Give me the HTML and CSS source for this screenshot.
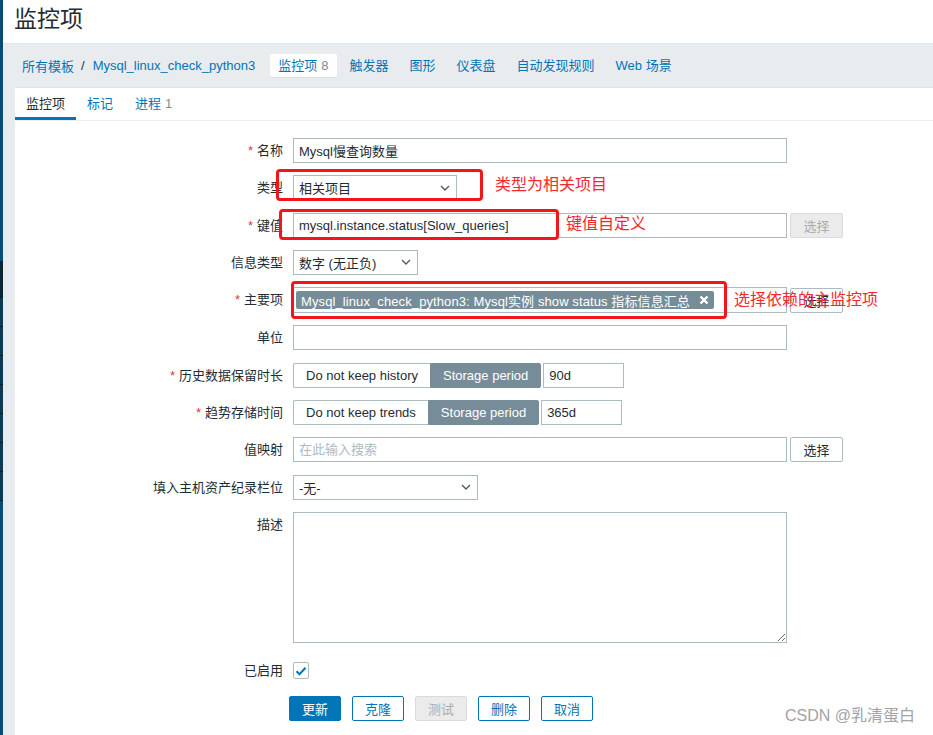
FILE: index.html
```html
<!DOCTYPE html>
<html lang="zh-CN">
<head>
  <meta charset="UTF-8">
  <title>监控项</title>
  <link rel="stylesheet" href="styles.css">
</head>
<body>
  <div class="page">
    <aside class="sidebar">
      <div class="sb-top"></div>
      <div class="sb-item sb-first"></div>
      <div class="sb-item"></div>
      <div class="sb-item"></div>
      <div class="sb-item"></div>
      <div class="sb-item"></div>
      <div class="sb-item"></div>
      <div class="sb-item"></div>
      <div class="sb-item"></div>
      <div class="sb-rest"></div>
    </aside>

    <div class="main">
      <header class="page-title">
        <h1>监控项</h1>
      </header>

      <div class="content">
        <nav class="header-nav">
          <ul class="breadcrumbs">
            <li><a href="#">所有模板</a></li>
            <li class="sep">/</li>
            <li><a href="#">Mysql_linux_check_python3</a></li>
          </ul>
          <ul class="host-nav">
            <li class="selected"><a href="#">监控项</a><span class="count">8</span></li>
            <li><a href="#">触发器</a></li>
            <li><a href="#">图形</a></li>
            <li><a href="#">仪表盘</a></li>
            <li><a href="#">自动发现规则</a></li>
            <li><a href="#">Web 场景</a></li>
          </ul>
        </nav>

        <div class="panel">
          <ul class="tabs">
            <li class="active">监控项</li>
            <li><a href="#">标记</a></li>
            <li><a href="#">进程</a><span class="count">1</span></li>
          </ul>

          <form class="form-grid">
            <label class="form-label req">名称</label>
            <div class="field">
              <input class="input w-full" type="text" value="Mysql慢查询数量">
            </div>

            <label class="form-label">类型</label>
            <div class="field">
              <div class="select w-type">
                <span>相关项目</span>
                <svg class="chevron" width="10" height="6" viewBox="0 0 10 6"><path d="M1 1l4 4 4-4" fill="none" stroke="#4f5b62" stroke-width="1.4"/></svg>
              </div>
            </div>

            <label class="form-label req">键值</label>
            <div class="field">
              <input class="input w-full" type="text" value="mysql.instance.status[Slow_queries]">
              <button type="button" class="btn-side" disabled>选择</button>
            </div>

            <label class="form-label">信息类型</label>
            <div class="field">
              <div class="select w-info">
                <span>数字 (无正负)</span>
                <svg class="chevron" width="10" height="6" viewBox="0 0 10 6"><path d="M1 1l4 4 4-4" fill="none" stroke="#4f5b62" stroke-width="1.4"/></svg>
              </div>
            </div>

            <label class="form-label req">主要项</label>
            <div class="field">
              <div class="multiselect w-full">
                <span class="chip">Mysql_linux_check_python3: Mysql实例 show status 指标信息汇总
                  <svg class="chip-x" width="10" height="10" viewBox="0 0 10 10"><path d="M1.5 1.5l7 7M8.5 1.5l-7 7" stroke="#fff" stroke-width="2.4"/></svg>
                </span>
              </div>
              <button type="button" class="btn-side">选择</button>
            </div>

            <label class="form-label">单位</label>
            <div class="field">
              <input class="input w-full" type="text" value="">
            </div>

            <label class="form-label req">历史数据保留时长</label>
            <div class="field">
              <div class="seg">
                <span class="seg-opt">Do not keep history</span>
                <span class="seg-opt on">Storage period</span>
              </div>
              <input class="input w-period" type="text" value="90d">
            </div>

            <label class="form-label req">趋势存储时间</label>
            <div class="field">
              <div class="seg">
                <span class="seg-opt">Do not keep trends</span>
                <span class="seg-opt on">Storage period</span>
              </div>
              <input class="input w-period" type="text" value="365d">
            </div>

            <label class="form-label">值映射</label>
            <div class="field">
              <input class="input w-full" type="text" placeholder="在此输入搜索">
              <button type="button" class="btn-side">选择</button>
            </div>

            <label class="form-label">填入主机资产纪录栏位</label>
            <div class="field">
              <div class="select w-inv">
                <span>-无-</span>
                <svg class="chevron" width="10" height="6" viewBox="0 0 10 6"><path d="M1 1l4 4 4-4" fill="none" stroke="#4f5b62" stroke-width="1.4"/></svg>
              </div>
            </div>

            <label class="form-label">描述</label>
            <div class="field">
              <textarea class="textarea w-full"></textarea>
            </div>

            <label class="form-label row-enabled">已启用</label>
            <div class="field row-enabled">
              <span class="checkbox">
                <svg width="12" height="10" viewBox="0 0 12 10"><path d="M1.5 5.2l3 3 6-6.5" fill="none" stroke="#0275b8" stroke-width="2"/></svg>
              </span>
            </div>

            <div class="form-buttons">
              <button type="button" class="btn btn-main">更新</button>
              <button type="button" class="btn">克隆</button>
              <button type="button" class="btn" disabled>测试</button>
              <button type="button" class="btn">删除</button>
              <button type="button" class="btn">取消</button>
            </div>
          </form>
        </div>
      </div>
    </div>

    <!-- screenshot annotations -->
    <div class="mark mark-type"></div>
    <div class="mark mark-key"></div>
    <div class="mark mark-master"></div>
    <div class="note note-type">类型为相关项目</div>
    <div class="note note-key">键值自定义</div>
    <div class="note note-master">选择依赖的主监控项</div>
    <div class="watermark">CSDN @乳清蛋白</div>
  </div>
</body>
</html>
```

FILE: styles.css
```css
/* Base */
body {
  margin: 0;
  background-color: #ffffff;
  color: #1f2c33;
  font-family: "Liberation Sans", "Noto Sans CJK SC", sans-serif;
  font-size: 13px;
  overflow: hidden;
}

a {
  color: #0275b8;
  text-decoration: none;
}

ul {
  list-style: none;
  margin: 0;
  padding: 0;
}

.page {
  position: relative;
  display: flex;
  height: 735px;
}

/* Sidebar strip */
.sidebar {
  width: 3px;
  flex-shrink: 0;
  display: flex;
  flex-direction: column;
  background-color: #0a4b71;
}

.sb-top {
  height: 261px;
  background-color: #0a4b71;
}

.sb-item {
  height: 28px;
  background-color: #0f3a56;
  border-bottom: 1px solid #071c2a;
}

.sb-first {
  height: 36px;
  background-color: #0b2638;
}

.sb-rest {
  flex: 1;
}

.main {
  flex: 1;
  display: flex;
  flex-direction: column;
  min-width: 0;
}

/* Title */
.page-title {
  height: 43px;
  border-bottom: 1px solid #dfe4e7;
  padding-left: 11px;
}

.page-title h1 {
  margin: 0;
  font-size: 23px;
  font-weight: normal;
  line-height: 38px;
  color: #1f2c33;
}

/* Gray content area */
.content {
  flex: 1;
  background-color: #e9ecef;
  padding-left: 12px;
  display: flex;
  flex-direction: column;
}

.header-nav {
  height: 43px;
  display: flex;
  align-items: center;
  padding-left: 7px;
}

.breadcrumbs {
  display: flex;
  align-items: center;
}

.breadcrumbs .sep {
  margin: 0 8px 0 7px;
  color: #1f2c33;
}

.host-nav {
  display: flex;
  align-items: center;
  gap: 5px;
  margin-left: 15px;
}

.host-nav li {
  padding: 0 8px;
  height: 23px;
  line-height: 23px;
}

.host-nav li.selected {
  background-color: #ffffff;
  border-radius: 2px;
  box-shadow: 0 1px 1px rgba(0, 0, 0, 0.06);
}

.count {
  color: #768d99;
  margin-left: 4px;
}

/* Panel */
.panel {
  flex: 1;
  background-color: #ffffff;
  border-top: 1px solid #dfe4e7;
}

.tabs {
  display: flex;
  height: 32px;
  border-bottom: 1px solid #ebeef0;
}

.tabs li {
  padding: 0 11px;
  line-height: 32px;
}

.tabs li.active {
  color: #1f2c33;
  box-shadow: inset 0 -3px 0 #0275b8;
}

/* Form */
.form-grid {
  display: grid;
  grid-template-columns: 268px 1fr;
  column-gap: 10px;
  row-gap: 12.3px;
  padding-top: 17px;
  margin: 0;
}

.form-label {
  text-align: right;
  line-height: 25px;
  white-space: nowrap;
}

.req::before {
  content: "*";
  color: #e33734;
  margin-right: 4px;
}

.field {
  display: flex;
  align-items: center;
  gap: 3px;
  min-height: 25px;
}

.input {
  box-sizing: border-box;
  height: 25px;
  border: 1px solid #acbbc2;
  padding: 0 5px;
  font: inherit;
  color: #1f2c33;
  background-color: #ffffff;
  outline: none;
}

.input::placeholder {
  color: #acbbc2;
}

.w-full {
  width: 494px;
}

.w-period {
  width: 81px;
  margin-left: -1px;
}

.select {
  box-sizing: border-box;
  height: 25px;
  border: 1px solid #acbbc2;
  padding: 0 6px 0 5px;
  display: flex;
  align-items: center;
  justify-content: space-between;
  background-color: #ffffff;
}

.w-type {
  width: 164px;
}

.w-info {
  width: 125px;
}

.w-inv {
  width: 185px;
}

.multiselect {
  box-sizing: border-box;
  height: 26px;
  border: 1px solid #acbbc2;
  padding: 0 2px;
  display: flex;
  align-items: center;
}

.chip {
  display: flex;
  align-items: center;
  gap: 9px;
  height: 18px;
  padding: 0 5px;
  background-color: #768d99;
  color: #ffffff;
  border-radius: 2px;
  white-space: nowrap;
  letter-spacing: 0.1px;
}

.chip-x {
  flex-shrink: 0;
}

.btn-side {
  box-sizing: border-box;
  width: 53px;
  height: 25px;
  border: 1px solid #acbbc2;
  border-radius: 2px;
  background-color: #ffffff;
  color: #1f2c33;
  font: inherit;
  padding: 0;
}

.btn-side:disabled {
  background-color: #ebebeb;
  border-color: #d8dcdf;
  color: #acacac;
}

.seg {
  display: flex;
}

.seg-opt {
  height: 25px;
  box-sizing: border-box;
  line-height: 23px;
  padding: 0 12px;
  border: 1px solid #acbbc2;
  white-space: nowrap;
}

.seg-opt:first-child {
  border-right: none;
  border-radius: 2px 0 0 2px;
}

.seg-opt.on {
  background-color: #768d99;
  border-color: #768d99;
  color: #ffffff;
  border-radius: 0 2px 2px 0;
}

.textarea {
  box-sizing: border-box;
  height: 131px;
  border: 1px solid #acbbc2;
  font: inherit;
  padding: 4px 5px;
  resize: both;
}

.row-enabled {
  margin-top: 3px;
}

.checkbox {
  box-sizing: border-box;
  width: 16px;
  height: 17px;
  border: 1px solid #acbbc2;
  border-radius: 2px;
  display: flex;
  align-items: center;
  justify-content: center;
}

/* Buttons */
.form-buttons {
  grid-column: 2;
  display: flex;
  gap: 11px;
  margin-left: -4px;
}

.btn {
  box-sizing: border-box;
  height: 25px;
  width: 52px;
  padding: 0;
  border: 1px solid #0275b8;
  border-radius: 2px;
  background-color: #ffffff;
  color: #0275b8;
  font: inherit;
}

.btn-main {
  background-color: #0275b8;
  color: #ffffff;
}

.btn:disabled {
  background-color: #ebebeb;
  border-color: #d8dcdf;
  color: #acacac;
}

/* Annotations drawn on the screenshot */
.mark {
  position: absolute;
  box-sizing: border-box;
  border: 3px solid #f2161b;
  border-radius: 4px;
}

.mark-type {
  left: 276px;
  top: 169px;
  width: 207px;
  height: 32px;
}

.mark-key {
  left: 279px;
  top: 209px;
  width: 280px;
  height: 31px;
}

.mark-master {
  left: 291px;
  top: 281px;
  width: 436px;
  height: 38px;
}

.note {
  position: absolute;
  color: #f5282d;
  font-size: 16px;
  line-height: 20px;
  white-space: nowrap;
}

.note-type {
  left: 495px;
  top: 175px;
}

.note-key {
  left: 566px;
  top: 214px;
}

.note-master {
  left: 734px;
  top: 290px;
}

.watermark {
  position: absolute;
  left: 785px;
  top: 706px;
  font-size: 16px;
  line-height: 20px;
  color: #a3a3a3;
  text-shadow: 0 0 2px #ffffff;
  white-space: nowrap;
}
```
